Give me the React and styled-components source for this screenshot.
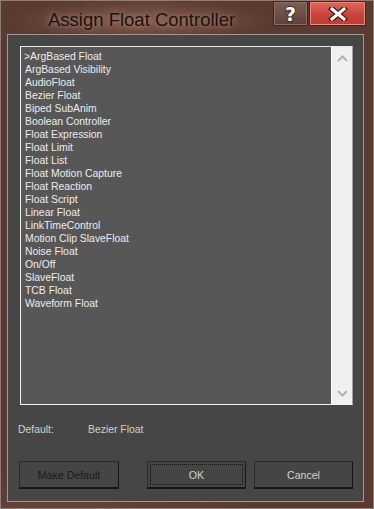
import React from 'react'
import styled, { createGlobalStyle } from 'styled-components'

const GlobalStyle = createGlobalStyle`
  html, body {
    margin: 0;
    padding: 0;
    background: #5b3a31;
  }
  * {
    box-sizing: border-box;
  }
`

const controllers = [
  '>ArgBased Float',
  'ArgBased Visibility',
  'AudioFloat',
  'Bezier Float',
  'Biped SubAnim',
  'Boolean Controller',
  'Float Expression',
  'Float Limit',
  'Float List',
  'Float Motion Capture',
  'Float Reaction',
  'Float Script',
  'Linear Float',
  'LinkTimeControl',
  'Motion Clip SlaveFloat',
  'Noise Float',
  'On/Off',
  'SlaveFloat',
  'TCB Float',
  'Waveform Float',
]

const App = () => {
  return (
    <>
      <GlobalStyle />
      <Window>
        <TitleBar>
          <Title>Assign Float Controller</Title>
          <Controls>
            <HelpButton>?</HelpButton>
            <CloseButton>
              <svg width="20" height="14" viewBox="0 0 20 14">
                <path d="M4 2 L16 12 M16 2 L4 12" stroke="#3a1a16" strokeWidth="5.5" strokeLinecap="square" fill="none" />
                <path d="M4 2 L16 12 M16 2 L4 12" stroke="#ffffff" strokeWidth="3" strokeLinecap="square" fill="none" />
              </svg>
            </CloseButton>
          </Controls>
        </TitleBar>
        <Content>
          <ListBox>
            <Items>
              {controllers.map((name) => (
                <Item key={name} $first={name.startsWith('>')}>{name}</Item>
              ))}
            </Items>
            <ScrollBar>
              <svg width="11" height="7" viewBox="0 0 11 7">
                <path d="M1 6 L5.5 1.5 L10 6" stroke="#b4b4b4" strokeWidth="2" fill="none" />
              </svg>
              <svg width="11" height="7" viewBox="0 0 11 7">
                <path d="M1 1 L5.5 5.5 L10 1" stroke="#b4b4b4" strokeWidth="2" fill="none" />
              </svg>
            </ScrollBar>
          </ListBox>
          <DefaultRow>
            <DefaultLabel>Default:</DefaultLabel>
            <span>Bezier Float</span>
          </DefaultRow>
          <ButtonRow>
            <Button $dim>Make Default</Button>
            <RightButtons>
              <Button $focused>OK</Button>
              <Button>Cancel</Button>
            </RightButtons>
          </ButtonRow>
        </Content>
      </Window>
    </>
  )
}

const Window = styled.div`
  width: 374px;
  height: 509px;
  display: flex;
  flex-direction: column;
  padding: 0 9px 6px 6px;
  border: 1px solid #8b7d78;
  background:
    radial-gradient(ellipse 130px 24px at 140px 20px, rgba(150, 110, 95, 0.6), transparent),
    radial-gradient(ellipse 200px 30px at 60px 505px, rgba(120, 80, 70, 0.35), transparent),
    #5b3a31;
  font-family: 'Liberation Sans', Tahoma, sans-serif;
`

const TitleBar = styled.div`
  height: 36px;
  display: flex;
  justify-content: space-between;
  align-items: flex-start;
  margin-right: -2px;
`

const Title = styled.div`
  margin: 8px 0 0 41px;
  font-size: 18.5px;
  color: #1c1210;
  text-shadow: 0 0 10px rgba(200, 160, 140, 0.6), 0 0 4px rgba(200, 160, 140, 0.45);
`

const Controls = styled.div`
  display: flex;
  gap: 1px;
`

const HelpButton = styled.div`
  width: 35px;
  height: 25px;
  display: flex;
  align-items: center;
  justify-content: center;
  border: 1px solid #3b2722;
  box-shadow: inset 0 0 0 1px #8b6f66;
  background: linear-gradient(#7c5e55, #5e423a);
  color: #ffffff;
  font-family: 'DejaVu Sans', sans-serif;
  font-weight: bold;
  font-size: 19px;
  -webkit-text-stroke: 1px #2a1a16;
  paint-order: stroke fill;
  text-shadow: 0 0 2px #2a1a16;
`

const CloseButton = styled.div`
  width: 57px;
  height: 25px;
  display: flex;
  align-items: center;
  justify-content: center;
  border: 1px solid #5a1d18;
  box-shadow: inset 0 0 0 1px #e78a7f;
  background: linear-gradient(#e0695c, #c9443a 55%, #c03b31);
`

const Content = styled.div`
  flex: 1;
  display: flex;
  flex-direction: column;
  padding: 11px 10px 12px 10px;
  border: 1px solid #a8968e;
  background: #464646;
`

const ListBox = styled.div`
  height: 359px;
  margin-left: 2px;
  display: flex;
  border: 1px solid #f4f4f4;
  border-right-color: #a0a0a0;
  border-top-color: #e6e6e6;
`

const Items = styled.div`
  flex: 1;
  padding: 3px 0 0 3px;
  background: #575757;
  border-right: 1px solid #ffffff;
`

const Item = styled.div`
  height: 13px;
  line-height: 13px;
  padding-left: ${(p) => (p.$first ? '0' : '1px')};
  font-size: 10.4px;
  color: #ececec;
  white-space: nowrap;
`

const ScrollBar = styled.div`
  width: 20px;
  display: flex;
  flex-direction: column;
  justify-content: space-between;
  align-items: center;
  padding: 8px 0 7px;
  background: #f0f0f0;
`

const DefaultRow = styled.div`
  display: flex;
  margin-top: 18px;
  height: 14px;
  line-height: 14px;
  font-size: 10.4px;
  color: #cfcfcf;
`

const DefaultLabel = styled.span`
  width: 70px;
`

const ButtonRow = styled.div`
  display: flex;
  justify-content: space-between;
  margin-top: 24px;
  margin-left: 1px;
`

const RightButtons = styled.div`
  display: flex;
  gap: 8px;
`

const Button = styled.div`
  position: relative;
  width: ${(p) => (p.$dim ? '100px' : '99px')};
  height: 28px;
  display: flex;
  align-items: center;
  justify-content: center;
  background: #454545;
  border: 1px solid #2c2c2c;
  border-right-color: #161616;
  border-bottom: 2px solid #161616;
  font-size: 10.6px;
  color: ${(p) => (p.$dim ? '#1a1a1a' : '#d2d2d2')};

  ${(p) =>
    p.$focused &&
    `
    &::after {
      content: '';
      position: absolute;
      inset: 2px;
      border: 1px dotted #111111;
    }
  `}
`

export default App
